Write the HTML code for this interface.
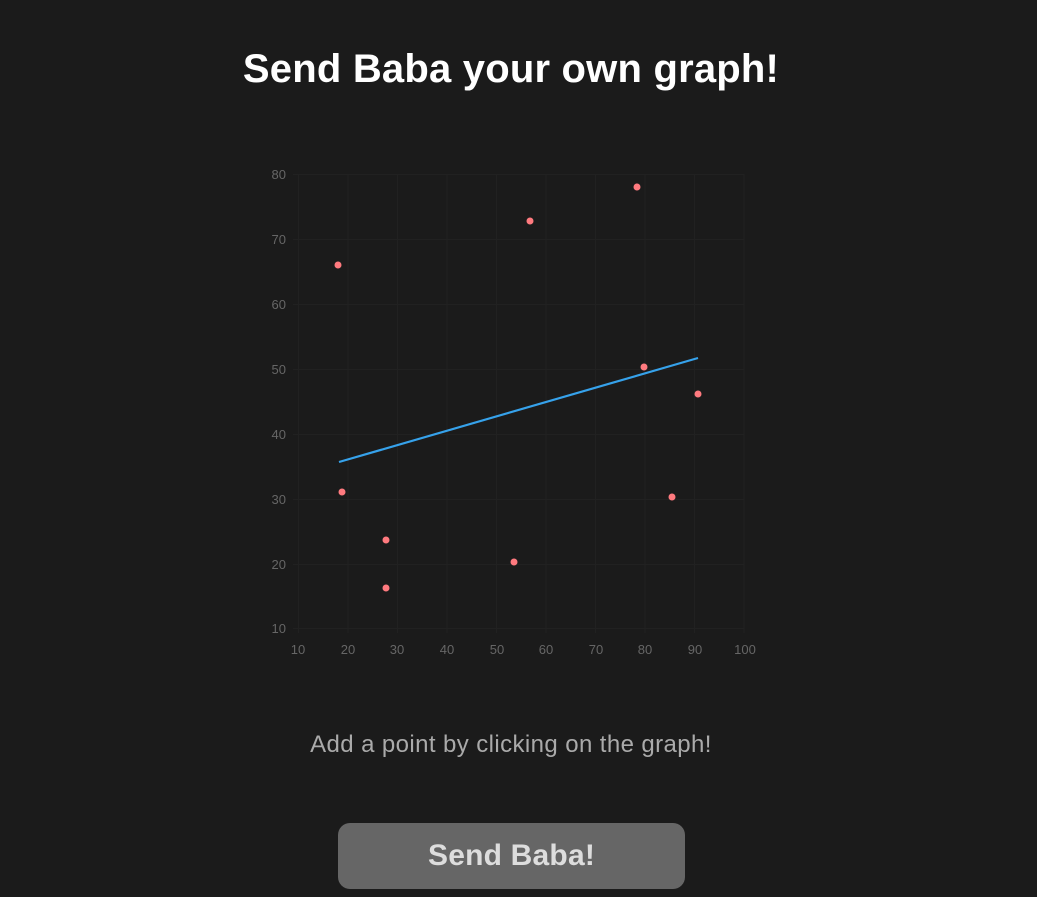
<!DOCTYPE html>
<html><head><meta charset="utf-8"><style>
html,body{margin:0;padding:0;background:#1b1b1b;width:1037px;height:897px;overflow:hidden;font-family:"Liberation Sans",sans-serif}
h1{position:absolute;left:0;width:1022px;top:46px;margin:0;text-align:center;color:#fff;font-size:40px;font-weight:bold;line-height:46px;letter-spacing:0.2px}
.sub{position:absolute;left:0;width:1022px;top:731px;text-align:center;color:#aaa;font-size:24px;line-height:28px;letter-spacing:0.4px}
.btn{position:absolute;left:338px;top:823px;width:347px;height:66px;background:#666;border-radius:12px;color:#ddd;font-weight:bold;font-size:30px;line-height:66px;text-align:center;letter-spacing:0.2px}
svg{position:absolute;left:0;top:0}
</style></head><body>
<h1>Send Baba your own graph!</h1>
<svg width="1037" height="700" font-family="Liberation Sans, sans-serif" font-size="13" fill="#666">
<g stroke="#212121" stroke-width="1">
<line x1="298.5" y1="174" x2="298.5" y2="633"/><line x1="348" y1="174" x2="348" y2="633"/><line x1="397.5" y1="174" x2="397.5" y2="633"/><line x1="447" y1="174" x2="447" y2="633"/><line x1="496.5" y1="174" x2="496.5" y2="633"/><line x1="546" y1="174" x2="546" y2="633"/><line x1="595.5" y1="174" x2="595.5" y2="633"/><line x1="645" y1="174" x2="645" y2="633"/><line x1="694.5" y1="174" x2="694.5" y2="633"/><line x1="744" y1="174" x2="744" y2="633"/>
<line x1="293" y1="174.5" x2="744" y2="174.5"/><line x1="293" y1="239.5" x2="744" y2="239.5"/><line x1="293" y1="304.5" x2="744" y2="304.5"/><line x1="293" y1="369.5" x2="744" y2="369.5"/><line x1="293" y1="434.5" x2="744" y2="434.5"/><line x1="293" y1="499.5" x2="744" y2="499.5"/><line x1="293" y1="564.5" x2="744" y2="564.5"/><line x1="293" y1="628.5" x2="744" y2="628.5"/>
</g>
<g text-anchor="end"><text x="286" y="179">80</text><text x="286" y="244">70</text><text x="286" y="309">60</text><text x="286" y="374">50</text><text x="286" y="439">40</text><text x="286" y="504">30</text><text x="286" y="569">20</text><text x="286" y="633">10</text></g>
<g text-anchor="middle"><text x="298" y="654">10</text><text x="348" y="654">20</text><text x="397" y="654">30</text><text x="447" y="654">40</text><text x="497" y="654">50</text><text x="546" y="654">60</text><text x="596" y="654">70</text><text x="645" y="654">80</text><text x="695" y="654">90</text><text x="745" y="654">100</text></g>
<line x1="339" y1="462" x2="698" y2="358" stroke="#36a2eb" stroke-width="2.2"/>
<g fill="#ff7a7f"><circle cx="338" cy="265" r="3.5"/><circle cx="530" cy="221" r="3.5"/><circle cx="637" cy="187" r="3.5"/><circle cx="644" cy="367" r="3.5"/><circle cx="698" cy="394" r="3.5"/><circle cx="342" cy="492" r="3.5"/><circle cx="386" cy="540" r="3.5"/><circle cx="386" cy="588" r="3.5"/><circle cx="514" cy="562" r="3.5"/><circle cx="672" cy="497" r="3.5"/></g>
</svg>
<div class="sub">Add a point by clicking on the graph!</div>
<div class="btn">Send Baba!</div>
</body></html>
